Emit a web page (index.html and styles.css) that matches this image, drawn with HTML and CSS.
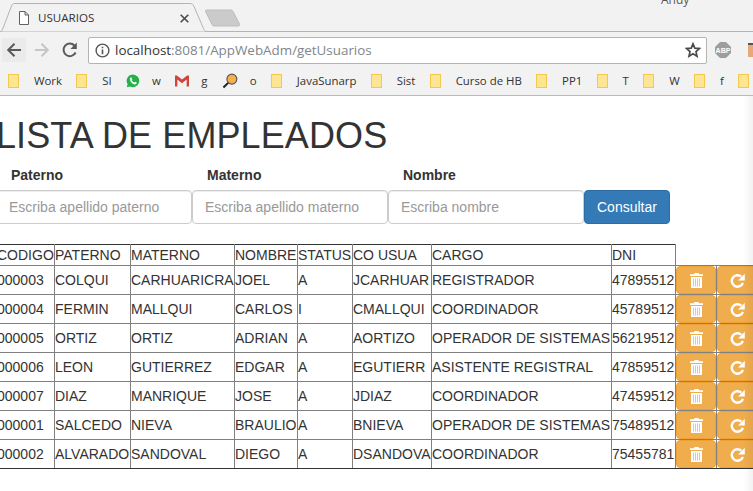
FILE: index.html
```html
<!DOCTYPE html>
<html lang="en">
<head>
<meta charset="UTF-8" />
<meta name="viewport" content="width=device-width, initial-scale=1" />
<title>USUARIOS</title>
<link rel="stylesheet" href="styles.css">
</head>
<body>
<header class="browser">
  <div class="tabstrip">
    <div class="tab">
      <svg class="tab-shape" width="208" height="32" viewBox="0 0 208 32"><path d="M0 31.500H.5C1.500 31.500 2 30.500 2.500 29.500L11.500 6C12.200 4.300 13 3.500 15 3.500H190C192 3.500 193 4.300 193.800 6L203.500 28.500C204.500 30.500 205 31.500 207 31.500H208" fill="#f2f2f2" stroke="#b4b4b4"/></svg>
      <svg class="page-icon" width="10" height="14" viewBox="0 0 10 14"><path d="M.5.5H6L9.500 4V13.500H.5ZM6 .5V4H9.500" fill="#fff" stroke="#5f6368"/></svg>
      <span class="tab-title">USUARIOS</span>
      <svg class="tab-close" width="9" height="9" viewBox="0 0 9 9"><path d="M.7.7 8.300 8.300M8.300.7.700 8.300" stroke="#4a4a4a" stroke-width="1.600"/></svg>
    </div>
    <svg class="newtab" width="36" height="18" viewBox="0 0 36 18"><path d="M1.500 1H26C27 1 27.500 1.500 28 2.500L34.500 15C35 16 34.500 17 33 17H9C8 17 7.500 16.500 7 15.500L.5 2.500C0 1.500.5 1 1.500 1Z" fill="#cbcbcb" stroke="#bdbdbd"/></svg>
    <span class="profile">Andy</span>
  </div>
  <div class="toolbar">
    <span class="nav-btn is-hover">
      <svg width="16" height="16" viewBox="0 0 16 16"><path d="M15 8H2.500M8.500 1.800 2.200 8l6.300 6.200" fill="none" stroke="#5a5a5a" stroke-width="2"/></svg>
    </span>
    <span class="nav-btn">
      <svg width="16" height="16" viewBox="0 0 16 16"><path d="M1 8H13.500M7.500 1.800 13.800 8 7.500 14.200" fill="none" stroke="#c6c6c6" stroke-width="2"/></svg>
    </span>
    <span class="nav-btn">
      <svg width="16" height="16" viewBox="0 0 16 16"><path d="M13.600 10.500A6.300 6.300 0 1 1 12.400 3.500" fill="none" stroke="#5a5a5a" stroke-width="2"/><path d="M14.800 .6V7H8.400Z" fill="#5a5a5a"/></svg>
    </span>
    <div class="omnibox">
      <svg class="info-icon" width="15" height="15" viewBox="0 0 15 15"><circle cx="7.500" cy="7.500" r="6.400" fill="none" stroke="#555" stroke-width="1.400"/><path d="M6.700 6.500H8.300V11.300H6.700ZM6.700 3.700H8.300V5.300H6.700Z" fill="#555"/></svg>
      <span class="url"><span class="url-host">localhost</span>:8081/AppWebAdm/getUsuarios</span>
      <svg class="star" width="16" height="16" viewBox="0 0 16 16"><path d="M8 1.800 9.800 6.100 14.500 6.500 11 9.600 12 14.200 8 11.800 4 14.200 5 9.600 1.500 6.500 6.200 6.100Z" fill="none" stroke="#4a4a4a" stroke-width="1.700"/></svg>
    </div>
    <svg class="abp" width="16" height="16" viewBox="0 0 16 16"><path d="M5 0H11L16 5V11L11 16H5L0 11V5Z" fill="#9e9e9e"/><text x="8" y="10.700" text-anchor="middle" class="abp-text">ABP</text></svg>
    <span class="ext-icon"></span>
  </div>
  <nav class="bookmarks">
    <a class="bm"><i class="folder"></i>Work</a>
    <a class="bm"><i class="folder"></i>SI</a>
    <a class="bm site">
      <svg width="14" height="14" viewBox="0 0 15 15"><path d="M7.500.5A6.800 6.800 0 0 0 1.700 10.800L.8 14.300 4.400 13.400A6.800 6.800 0 1 0 7.500.5Z" fill="#25b14a"/><path d="M5 3.800C4 4.500 3.800 6 5 8 6.200 10 8.300 11.300 9.800 11.200 11 11 11.600 10 11.500 9.200L9.700 8.200 8.800 9.200C7.800 8.900 6.400 7.500 6 6.500L6.800 5.500 5.900 3.800Z" fill="#fff"/></svg>w
    </a>
    <a class="bm site">
      <svg width="14" height="12" viewBox="0 0 15 12"><path d="M0 0H2L7.500 4.500 13 0H15V12H12.500V4.500L7.500 8.500 2.500 4.500V12H0Z" fill="#d0453a"/></svg>g
    </a>
    <a class="bm site">
      <svg width="16" height="16" viewBox="0 0 17 17"><circle cx="10.500" cy="6.500" r="5.300" fill="#f5b04c" stroke="#555" stroke-width="1.200"/><path d="M6.500 10.500 1.500 15.500" stroke="#222" stroke-width="2.200"/></svg>o
    </a>
    <a class="bm"><i class="folder"></i>JavaSunarp</a>
    <a class="bm"><i class="folder"></i>Sist</a>
    <a class="bm"><i class="folder"></i>Curso de HB</a>
    <a class="bm"><i class="folder"></i>PP1</a>
    <a class="bm"><i class="folder"></i>T</a>
    <a class="bm"><i class="folder"></i>W</a>
    <a class="bm"><i class="folder"></i>f</a>
    <a class="bm"><i class="folder"></i></a>
  </nav>
</header>

<main class="content">
  <h1>LISTA DE EMPLEADOS</h1>

  <form class="search-form">
    <div class="field">
      <label for="paterno">Paterno</label>
      <input type="text" id="paterno" placeholder="Escriba apellido paterno" />
    </div>
    <div class="field">
      <label for="materno">Materno</label>
      <input type="text" id="materno" placeholder="Escriba apellido materno" />
    </div>
    <div class="field">
      <label for="nombre">Nombre</label>
      <input type="text" id="nombre" placeholder="Escriba nombre" />
    </div>
    <button type="submit" class="btn-consultar">Consultar</button>
  </form>

  <table id="usuarios-table">
    <colgroup>
      <col class="c-codigo"><col class="c-paterno"><col class="c-materno"><col class="c-nombre"><col class="c-status">
      <col class="c-usua"><col class="c-cargo"><col class="c-dni"><col class="c-action"><col class="c-action">
    </colgroup>
    <thead>
      <tr>
        <th>CODIGO</th><th>PATERNO</th><th>MATERNO</th><th>NOMBRE</th><th>STATUS</th>
        <th>CO USUA</th><th>CARGO</th><th>DNI</th>
      </tr>
    </thead>
    <tbody></tbody>
  </table>
</main>
<div class="edge-shade"></div>

<script>
  const usuarios = [
    ["000003", "COLQUI", "CARHUARICRA", "JOEL", "A", "JCARHUAR", "REGISTRADOR", "47895512"],
    ["000004", "FERMIN", "MALLQUI", "CARLOS", "I", "CMALLQUI", "COORDINADOR", "45789512"],
    ["000005", "ORTIZ", "ORTIZ", "ADRIAN", "A", "AORTIZO", "OPERADOR DE SISTEMAS", "56219512"],
    ["000006", "LEON", "GUTIERREZ", "EDGAR", "A", "EGUTIERR", "ASISTENTE REGISTRAL", "47859512"],
    ["000007", "DIAZ", "MANRIQUE", "JOSE", "A", "JDIAZ", "COORDINADOR", "47459512"],
    ["000001", "SALCEDO", "NIEVA", "BRAULIO", "A", "BNIEVA", "OPERADOR DE SISTEMAS", "75489512"],
    ["000002", "ALVARADO", "SANDOVAL", "DIEGO", "A", "DSANDOVA", "COORDINADOR", "75455781"]
  ];

  const trashIcon = `<svg width="13" height="15" viewBox="0 0 13 15"><path d="M4.500 0H8.500L9 1.200H13V3H0V1.200H4ZM1 4H12V15H1ZM3 5.500V13.500H3.700V5.500ZM5 5.500V13.500H5.700V5.500ZM7.300 5.500V13.500H8V5.500ZM9.300 5.500V13.500H10V5.500Z" fill="#fff" fill-rule="evenodd"/></svg>`;
  const redoIcon = `<svg width="15" height="15" viewBox="0 0 15 15"><path d="M12.900 9.800A5.700 5.700 0 1 1 11.300 3.700" fill="none" stroke="#fff" stroke-width="2.400"/><path d="M14.800 .8V7.500H8.100Z" fill="#fff"/></svg>`;

  const tbody = document.querySelector("#usuarios-table tbody");
  usuarios.forEach(u => {
    const row = document.createElement("tr");
    row.innerHTML = u.map(v => `<td>${v}</td>`).join("") + `
      <td class="action"><button class="btn-action">${trashIcon}</button></td>
      <td class="action"><button class="btn-action">${redoIcon}</button></td>
    `;
    tbody.appendChild(row);
  });
</script>
</body>
</html>
```

FILE: styles.css
```css
html, body {
  margin: 0;
  height: 491px;
  overflow: hidden;
  background: #fff;
}
body {
  font-family: "Liberation Sans", Arial, sans-serif;
  font-size: 14px;
  line-height: 20px;
  color: #333;
}
.browser {
  background: #f2f2f2;
  border-bottom: 1px solid #b9b9b9;
  height: 95px;
  font-family: "Open Sans", "Noto Sans", sans-serif;
}
.tabstrip {
  height: 32px;
  display: flex;
  position: relative;
  overflow: hidden;
  box-shadow: inset 0 -1px 0 #b4b4b4;
}
.tab {
  position: relative;
  width: 207px;
  display: flex;
  align-items: center;
  height: 32px;
  box-sizing: border-box;
  padding: 4px 0 0 19px;
}
.tab-shape {
  position: absolute;
  left: 0;
  top: 0;
}
.page-icon, .tab-title, .tab-close {
  position: relative;
}
.tab-title {
  margin-left: 9px;
  font-size: 11.600px;
  color: #333;
  flex: 1;
}
.tab-close {
  margin-right: 18px;
}
.newtab {
  margin: 9px 0 0 -2px;
}
.profile {
  position: absolute;
  left: 661px;
  top: -10px;
  font-size: 12px;
  color: #555;
  text-shadow: 0 0 2px #fff;
}
.toolbar {
  height: 32px;
  box-sizing: border-box;
  padding: 4px 0 0 2px;
  display: flex;
  align-items: center;
}
.nav-btn {
  width: 24px;
  height: 24px;
  margin-right: 4px;
  display: flex;
  align-items: center;
  justify-content: center;
  border-radius: 2px;
  flex: none;
}
.nav-btn.is-hover {
  background: #ebebeb;
}
.omnibox {
  margin-left: 2px;
  width: 619px;
  height: 27px;
  box-sizing: border-box;
  background: #fff;
  border: 1px solid #b4b4b4;
  border-radius: 2px;
  display: flex;
  align-items: center;
  padding: 0 5px 0 6px;
  flex: none;
}
.info-icon {
  flex: none;
}
.url {
  margin-left: 5px;
  font-size: 13.400px;
  color: #80868b;
  white-space: nowrap;
  flex: 1;
}
.url-host {
  color: #333;
}
.abp {
  margin-left: 8px;
  flex: none;
}
.abp-text {
  font-size: 7px;
  font-weight: bold;
  fill: #fff;
  font-family: "Liberation Sans", sans-serif;
}
.ext-icon {
  width: 14px;
  height: 14px;
  margin-left: 17px;
  background: #e8a878;
  border-top: 2px solid #555;
  box-sizing: border-box;
  flex: none;
}
.bookmarks {
  height: 31px;
  padding: 3px 0 0 8px;
  box-sizing: border-box;
  display: flex;
  align-items: center;
  gap: 14.300px;
  white-space: nowrap;
  overflow: hidden;
  font-size: 11.400px;
}
.bm {
  display: flex;
  align-items: center;
  gap: 14px;
  color: #333;
  flex: none;
}
.bm.site {
  gap: 12px;
}
.folder {
  width: 11px;
  height: 14px;
  box-sizing: border-box;
  background: #fde591;
  border: 1px solid #f0c94f;
  flex: none;
  margin-right: 1px;
}
.content {
  margin-left: -4px;
}
h1 {
  font-size: 36px;
  font-weight: 500;
  line-height: 40px;
  margin: 20px 0 9px;
  letter-spacing: .1px;
}
.search-form {
  display: flex;
  align-items: flex-end;
}
.field {
  width: 196px;
}
.field label {
  display: block;
  font-weight: bold;
  padding-left: 15px;
  margin-bottom: 5px;
}
.field input {
  display: block;
  width: 196px;
  height: 34px;
  box-sizing: border-box;
  padding: 6px 12px;
  font: inherit;
  color: #555;
  background: #fff;
  border: 1px solid #ccc;
  border-radius: 4px;
  box-shadow: inset 0 1px 1px rgba(0,0,0,.075);
}
.field input::placeholder {
  color: #999;
}
.btn-consultar {
  height: 34px;
  padding: 6px 12px;
  font: inherit;
  color: #fff;
  background: #337ab7;
  border: 1px solid #2e6da4;
  border-radius: 4px;
}
table {
  margin-top: 20px;
  border-collapse: collapse;
  table-layout: fixed;
  width: 761px;
}
.c-codigo { width: 58px; }
.c-paterno { width: 76px; }
.c-materno { width: 104px; }
.c-nombre { width: 63px; }
.c-status { width: 55px; }
.c-usua { width: 79px; }
.c-cargo { width: 180px; }
.c-dni { width: 64px; }
.c-action { width: 41px; }
th, td {
  padding: 0;
  border: 1px solid #808080;
  font-weight: normal;
  text-align: left;
  white-space: nowrap;
  height: 28px;
}
th {
  height: 20px;
  border-top-color: #333;
}
tr:last-child td {
  border-bottom-color: #333;
}
td.action {
  line-height: 0;
}
.btn-action {
  width: 40px;
  height: 28px;
  padding: 0;
  display: flex;
  align-items: center;
  justify-content: center;
  background: #f0ad4e;
  border: 1px solid #eea236;
  border-radius: 4px;
}
.edge-shade {
  position: absolute;
  top: 96px;
  right: 0;
  bottom: 0;
  width: 10px;
  background: linear-gradient(to right, rgba(0,0,0,0), rgba(0,0,0,.05));
  pointer-events: none;
}
```
